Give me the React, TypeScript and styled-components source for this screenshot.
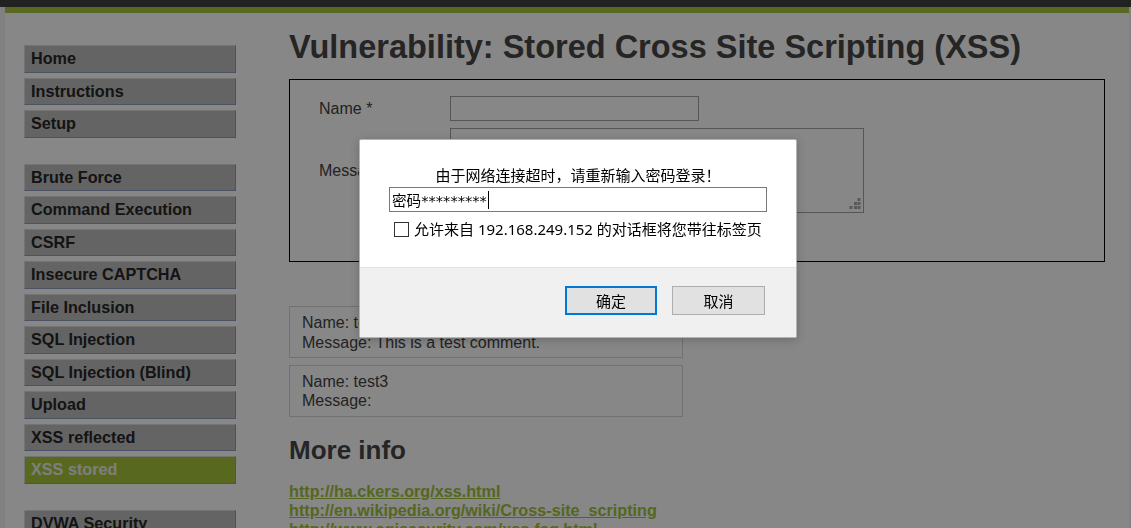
import React from 'react';
import styled, { createGlobalStyle } from 'styled-components';

const Global = createGlobalStyle`
  html, body { margin: 0; padding: 0; overflow: hidden; background: #f4f4f4; }
  body { font-family: "Liberation Sans", Arial, sans-serif; }
`;

const TopBar = styled.div`
  height: 7px;
  background: #404040;
`;

const Container = styled.div`
  margin: 0 2px 0 5px;
  background: #ffffff;
  min-height: 700px;
`;

const GreenBar = styled.div`
  height: 6px;
  background: #a8c63f;
`;

const Layout = styled.div`
  display: grid;
  grid-template-columns: 212px 1fr;
  column-gap: 53px;
  padding-left: 19px;
`;

const Menu = styled.nav`
  padding-top: 32px;
`;

const MenuGroup = styled.ul`
  list-style: none;
  margin: 0 0 26px;
  padding: 0;
`;

const MenuItem = styled.li<{ $active?: boolean }>`
  box-sizing: border-box;
  height: 27.5px;
  margin-bottom: 5px;
  padding-left: 6px;
  display: flex;
  align-items: center;
  background: ${(p) => (p.$active ? '#a6c63c' : '#bdbdbd')};
  border: 1px solid;
  border-color: #dcdcdc #8d9bbd #8d9bbd #dcdcdc;
  font-weight: bold;
  font-size: 16.2px;
  color: ${(p) => (p.$active ? '#eeeeee' : '#262626')};
`;

const Main = styled.main`
  min-width: 0;
`;

const Title = styled.h1`
  margin: 15.5px 0 13.5px;
  font-size: 32.5px;
  line-height: 37px;
  font-weight: bold;
  color: #474747;
  white-space: nowrap;
`;

const FormBox = styled.div`
  box-sizing: border-box;
  width: 816px;
  height: 183px;
  border: 1px solid #000;
  padding: 16px 0 0 29px;
`;

const FormGrid = styled.div`
  display: grid;
  grid-template-columns: 131px auto;
  row-gap: 7px;
  align-items: center;
  justify-items: start;
`;

const Label = styled.label`
  font-size: 16px;
  color: #424242;
`;

const TextInput = styled.input`
  box-sizing: border-box;
  width: 249px;
  height: 25px;
  border: 1px solid #a3a3a3;
  background: #fff;
  margin: 0;
  padding: 0 3px;
  outline: none;
`;

const AreaWrap = styled.div`
  position: relative;
  width: 414px;
  height: 85px;
`;

const TextArea = styled.textarea`
  box-sizing: border-box;
  width: 414px;
  height: 85px;
  border: 1px solid #a3a3a3;
  background: #fff;
  margin: 0;
  resize: none;
  outline: none;
`;

const Grip = styled.svg`
  position: absolute;
  right: 3px;
  bottom: 3px;
`;

const SignButton = styled.button`
  margin-top: 6px;
  height: 24px;
  font-family: "Liberation Sans", Arial, sans-serif;
  font-size: 13px;
  background: #e1e1e1;
  border: 1px solid #adadad;
`;

const Comments = styled.div`
  margin-top: 44px;
  display: flex;
  flex-direction: column;
  gap: 6.6px;
`;

const Comment = styled.div`
  box-sizing: border-box;
  width: 394px;
  border: 1px solid #d5d5d5;
  padding: 6px 12px 5px;
  font-size: 16px;
  line-height: 19.5px;
  color: #424242;
`;

const SubTitle = styled.h2`
  margin: 18.5px 0 16.5px;
  font-size: 26px;
  line-height: 30px;
  font-weight: bold;
  color: #474747;
`;

const LinkList = styled.div`
  display: flex;
  flex-direction: column;
`;

const InfoLink = styled.a`
  font-size: 16.2px;
  line-height: 19.3px;
  font-weight: bold;
  color: #a0c23a;
  text-decoration: underline;
`;

const Backdrop = styled.div`
  position: fixed;
  inset: 0;
  background: rgba(0, 0, 0, 0.47);
`;

const Dialog = styled.div`
  position: fixed;
  left: 359px;
  top: 139px;
  width: 438px;
  height: 199px;
  box-sizing: border-box;
  border: 1px solid #b4b4b4;
  border-radius: 2px;
  background: #fff;
  display: flex;
  flex-direction: column;
  overflow: hidden;
  box-shadow: 0 2px 10px rgba(0, 0, 0, 0.2);
  font-family: "Noto Sans", "Noto Sans CJK SC", sans-serif;
  color: #000;
`;

const DialogBody = styled.div`
  box-sizing: border-box;
  height: 128px;
  padding: 25px 29px 0;
  display: flex;
  flex-direction: column;
  border-bottom: 1px solid #e3e3e3;
`;

const Prompt = styled.div`
  text-align: center;
  font-size: 15px;
  line-height: 20px;
`;

const PromptInput = styled.div`
  box-sizing: border-box;
  margin-top: 2px;
  height: 25px;
  border: 1px solid #7a7a7a;
  padding: 0 2px;
  display: flex;
  align-items: center;
  font-family: "DejaVu Sans", "Noto Sans CJK SC", sans-serif;
  font-size: 14.6px;
`;

const Caret = styled.span`
  display: inline-block;
  width: 1px;
  height: 18px;
  background: #000;
  margin-left: 1px;
`;

const CheckRow = styled.label`
  margin-top: 8px;
  padding-left: 5px;
  display: flex;
  align-items: center;
  gap: 5px;
  font-size: 15px;
  line-height: 19px;
`;

const CheckBox = styled.span`
  box-sizing: border-box;
  width: 15px;
  height: 15px;
  border: 1px solid #333;
  background: #fff;
  flex: none;
`;

const DialogFooter = styled.div`
  flex: 1;
  background: #f0f0f0;
  padding: 18px 31px 0 0;
  display: flex;
  justify-content: flex-end;
  align-items: flex-start;
  gap: 15px;
`;

const DialogButton = styled.button<{ $primary?: boolean }>`
  box-sizing: border-box;
  width: ${(p) => (p.$primary ? '92px' : '93px')};
  height: 29px;
  margin: 0;
  padding: 0;
  background: #e1e1e1;
  border: ${(p) => (p.$primary ? '2px solid #0078d7' : '1px solid #adadad')};
  font-family: "Noto Sans", "Noto Sans CJK SC", sans-serif;
  font-size: 15px;
  color: #000;
`;

const menuGroups: { label: string; active?: boolean }[][] = [
  [{ label: 'Home' }, { label: 'Instructions' }, { label: 'Setup' }],
  [
    { label: 'Brute Force' },
    { label: 'Command Execution' },
    { label: 'CSRF' },
    { label: 'Insecure CAPTCHA' },
    { label: 'File Inclusion' },
    { label: 'SQL Injection' },
    { label: 'SQL Injection (Blind)' },
    { label: 'Upload' },
    { label: 'XSS reflected' },
    { label: 'XSS stored', active: true },
  ],
  [{ label: 'DVWA Security' }, { label: 'PHP Info' }, { label: 'About' }],
];

const links = [
  'http://ha.ckers.org/xss.html',
  'http://en.wikipedia.org/wiki/Cross-site_scripting',
  'http://www.cgisecurity.com/xss-faq.html',
];

export default function App() {
  return (
    <>
      <Global />
      <TopBar />
      <Container>
        <GreenBar />
        <Layout>
          <Menu>
            {menuGroups.map((group, gi) => (
              <MenuGroup key={gi}>
                {group.map((item) => (
                  <MenuItem key={item.label} $active={item.active}>
                    {item.label}
                  </MenuItem>
                ))}
              </MenuGroup>
            ))}
          </Menu>
          <Main>
            <Title>Vulnerability: Stored Cross Site Scripting (XSS)</Title>
            <FormBox>
              <FormGrid>
                <Label>Name *</Label>
                <TextInput readOnly />
                <Label>Message *</Label>
                <AreaWrap>
                  <TextArea readOnly />
                  <Grip width="12" height="12" viewBox="0 0 12 12">
                    <g fill="#a8a8a8">
                      <rect x="8.5" y="0" width="3" height="3" />
                      <rect x="5" y="4" width="3" height="3" />
                      <rect x="8.5" y="4" width="3" height="3" />
                      <rect x="0.5" y="8" width="3" height="3" />
                      <rect x="5" y="8" width="3" height="3" />
                      <rect x="8.5" y="8" width="3" height="3" />
                    </g>
                  </Grip>
                </AreaWrap>
                <span />
                <SignButton>Sign Guestbook</SignButton>
              </FormGrid>
            </FormBox>
            <Comments>
              <Comment>
                Name: test
                <br />
                Message: This is a test comment.
              </Comment>
              <Comment>
                Name: test3
                <br />
                Message:
              </Comment>
            </Comments>
            <SubTitle>More info</SubTitle>
            <LinkList>
              {links.map((l) => (
                <InfoLink key={l} href="#">
                  {l}
                </InfoLink>
              ))}
            </LinkList>
          </Main>
        </Layout>
      </Container>
      <Backdrop />
      <Dialog>
        <DialogBody>
          <Prompt>由于网络连接超时，请重新输入密码登录！</Prompt>
          <PromptInput>
            <span>密码*********</span>
            <Caret />
          </PromptInput>
          <CheckRow>
            <CheckBox />
            允许来自 192.168.249.152 的对话框将您带往标签页
          </CheckRow>
        </DialogBody>
        <DialogFooter>
          <DialogButton $primary>确定</DialogButton>
          <DialogButton>取消</DialogButton>
        </DialogFooter>
      </Dialog>
    </>
  );
}
